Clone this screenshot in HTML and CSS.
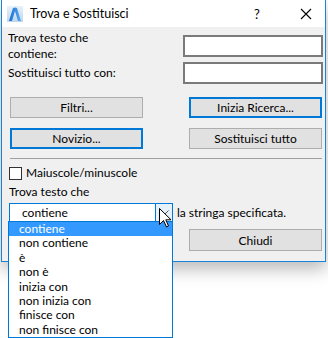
FILE: index.html
```html
<!DOCTYPE html>
<html>
<head>
  <link rel="stylesheet" href="styles.css">
</head>
<body>
  <div class="window">
    <div class="titlebar">
      <svg class="app-icon" width="16" height="16" viewBox="0 0 16 16">
        <defs>
          <linearGradient id="bg" x1="0" y1="0" x2="0" y2="1">
            <stop offset="0" stop-color="#e8f2fb"/>
            <stop offset="1" stop-color="#bcd6ee"/>
          </linearGradient>
          <linearGradient id="arch" x1="0" y1="0" x2="1" y2="0">
            <stop offset="0" stop-color="#1b6fd0"/>
            <stop offset="1" stop-color="#5aa8f0"/>
          </linearGradient>
        </defs>
        <rect x="0" y="0" width="16" height="16" fill="url(#bg)"/>
        <path d="M2 15 L6 2 Q8 1 10 2 L14 15 L11 15 L8 5 L5 15 Z" fill="url(#arch)"/>
      </svg>
      <span class="title">Trova e Sostituisci</span>
      <span class="help">?</span>
      <svg class="close" width="12" height="12" viewBox="0 0 12 12">
        <path d="M1 1 L11 11 M11 1 L1 11" stroke="#000" stroke-width="1.1"/>
      </svg>
    </div>

    <div class="content">
      <div class="field-row first">
        <div class="label two-line">Trova testo che<br>contiene:</div>
        <div class="input"></div>
      </div>
      <div class="field-row">
        <div class="label">Sostituisci tutto con:</div>
        <div class="input"></div>
      </div>

      <div class="button-row first-buttons">
        <button class="btn">Filtri...</button>
        <button class="btn focused">Inizia Ricerca...</button>
      </div>
      <div class="button-row">
        <button class="btn focused">Novizio...</button>
        <button class="btn">Sostituisci tutto</button>
      </div>

      <div class="separator"></div>

      <label class="check">
        <span class="box"></span>
        <span>Maiuscole/minuscole</span>
      </label>

      <div class="caption">Trova testo che</div>

      <div class="select-row">
        <div class="select">
          <span class="select-value">contiene</span>
          <span class="select-arrow">
            <svg width="9" height="6" viewBox="0 0 9 6"><path d="M0.5 0.5 L4.5 4.5 L8.5 0.5" fill="none" stroke="#555" stroke-width="1"/></svg>
          </span>
        </div>
        <span class="select-after">la stringa specificata.</span>
      </div>

      <div class="button-row last-buttons">
        <div class="spacer"></div>
        <button class="btn">Chiudi</button>
      </div>
    </div>

    <ul class="dropdown">
      <li class="selected">contiene</li>
      <li>non contiene</li>
      <li>è</li>
      <li>non è</li>
      <li>inizia con</li>
      <li>non inizia con</li>
      <li>finisce con</li>
      <li>non finisce con</li>
    </ul>

    <svg class="cursor" width="13" height="20" viewBox="0 0 13 20">
      <path d="M0.5 0.5 L0.5 16.5 L4.5 12.5 L7.5 19 L9.5 18 L6.8 11.8 L12 11.8 Z" fill="#fff" stroke="#000" stroke-width="1" stroke-linejoin="miter"/>
    </svg>
  </div>
</body>
</html>
```

FILE: styles.css
```css
html, body {
  height: 100%;
}

body {
  margin: 0;
  min-height: 338px;
  background: #fff;
  font-family: Lato, "Noto Sans", sans-serif;
  font-size: 12px;
  color: #000;
}

.window {
  position: relative;
  width: 323px;
  height: 261px;
  margin-left: 1px;
  border: 1px solid #1883d7;
  border-top: none;
  background: #f0f0f0;
  box-shadow: 0 7px 16px rgba(0, 0, 0, 0.28);
}

.titlebar {
  display: flex;
  align-items: center;
  height: 27px;
  background: #fff;
}

.app-icon {
  margin-left: 5px;
  margin-right: 7px;
}

.title {
  flex: 1;
  font-size: 12.5px;
}

.help {
  width: 14px;
  margin-right: 32px;
  font-size: 13px;
}

.close {
  margin-right: 13px;
}

.content {
  padding: 0 2px 0 6px;
}

.field-row {
  display: flex;
  justify-content: space-between;
}

.field-row.first {
  padding-top: 3px;
}

.label {
  line-height: 22px;
}

.label.two-line {
  line-height: 16px;
}

.field-row.first .input {
  margin-top: 5px;
  margin-bottom: 1px;
}

.input {
  width: 136px;
  height: 18px;
  border: 2px solid #7a7a7a;
  background: #fff;
}

.button-row {
  display: flex;
  justify-content: space-between;
  margin-top: 10px;
  padding-left: 2px;
  padding-right: 1px;
}

.button-row.first-buttons {
  margin-top: 13px;
}

.btn {
  width: 133px;
  height: 21px;
  padding: 0;
  border: 1px solid #adadad;
  background: #e1e1e1;
  font-family: inherit;
  font-size: 12px;
  color: #000;
}

.btn.focused {
  border: 2px solid #0078d7;
}

.separator {
  height: 1px;
  margin: 9px 1px 0 2px;
  background: #a0a0a0;
}

.check {
  display: flex;
  align-items: center;
  gap: 4px;
  margin-top: 7px;
  margin-left: 1px;
  line-height: 14px;
}

.box {
  width: 11px;
  height: 11px;
  border: 1px solid #333;
  background: #fff;
}

.caption {
  margin-top: 4px;
  line-height: 16px;
  margin-left: 1px;
}

.select-row {
  display: flex;
  align-items: center;
  gap: 4px;
  margin-top: 3px;
  margin-left: 1px;
}

.select {
  display: flex;
  width: 162px;
  height: 17px;
  border: 1px solid #0078d7;
  background: #fff;
}

.select-value {
  flex: 1;
  padding-left: 12px;
  line-height: 17px;
}

.select-arrow {
  display: flex;
  align-items: center;
  justify-content: center;
  width: 16px;
  background: #e5f1fb;
  border-left: 1px solid #0078d7;
}

.select-after {
  line-height: 17px;
}

.button-row.last-buttons {
  margin-top: 7px;
}

.button-row.last-buttons .btn {
  height: 22px;
}

.dropdown {
  position: absolute;
  left: 6px;
  top: 221px;
  width: 163px;
  margin: 0;
  padding: 0;
  list-style: none;
  border: 1px solid #0078d7;
  background: #fff;
  z-index: 2;
}

.dropdown li {
  height: 14.4px;
  line-height: 14px;
  padding-left: 10px;
}

.dropdown li.selected {
  background: #3399ff;
  color: #fff;
}

.cursor {
  position: absolute;
  left: 157px;
  top: 208px;
  z-index: 3;
}
```
